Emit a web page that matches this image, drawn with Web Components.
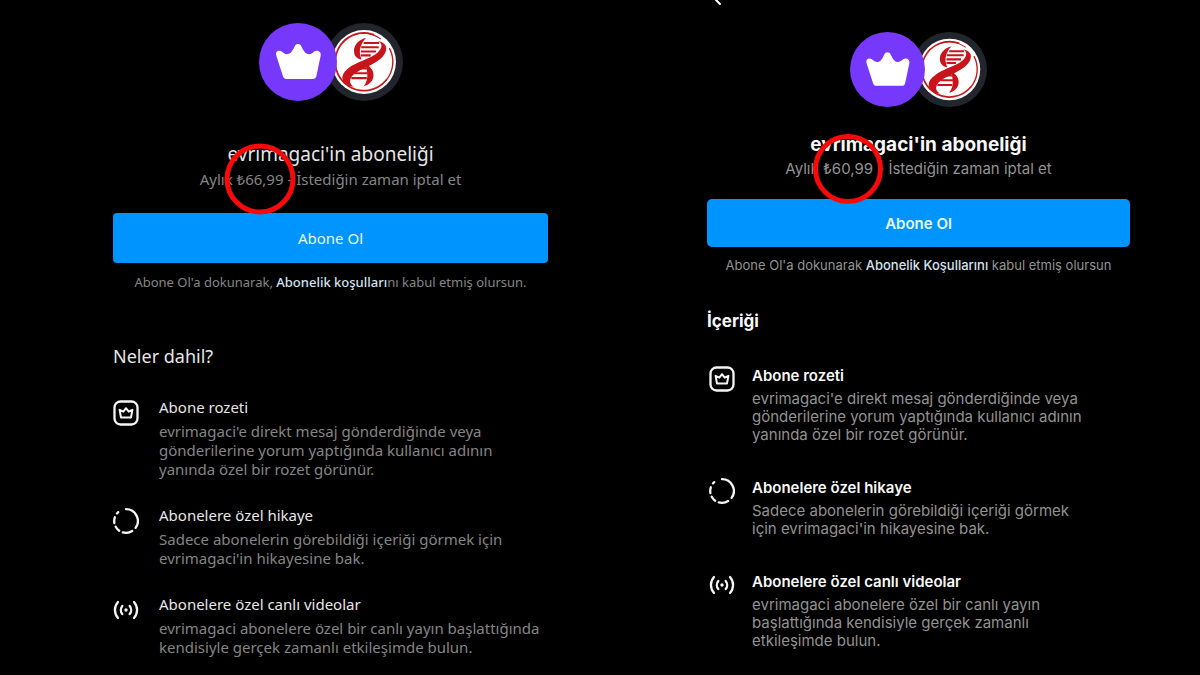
<!DOCTYPE html>
<html lang="tr">
<head>
<meta charset="utf-8">
<title>evrimagaci'in aboneliği</title>
<style>
  html, body { margin: 0; background: #000; }
  .compare { display: grid; grid-template-columns: 1fr 1fr; min-height: 100vh; overflow: hidden; }
  .android {
    font-family: "Noto Sans", sans-serif;
    --pad: 23px 52px 0 113px; --avatar: 78px; --overlap: 12px;
    --title-gap: 41px; --title-size: 19px; --title-weight: 400; --title-line: 25px;
    --button-gap: 22px; --button-height: 50px; --button-weight: 400; --radius: 4px;
    --terms-gap: 10px; --heading-gap: 53px; --heading-size: 18px; --heading-weight: 400;
    --list-gap: 27px; --item-gap: 24px; --item-weight: 400; --line: 19px; --desc-gap: 3px; --desc-width: 390px;
    --icon-col: 46px; --icon-pad: 5px 0 0; --ring: 71px; --ink: #e6e6e6; --muted: #858585;
  }
  .ios {
    font-family: "Inter", sans-serif;
    --pad: 0 70px 0 107px; --avatar: 75px; --overlap: 13px;
    --title-gap: 26px; --title-size: 19px; --title-weight: 700; --title-line: 24px;
    --button-gap: 18px; --button-height: 48px; --button-weight: 600; --radius: 5px;
    --terms-gap: 9px; --heading-gap: 35px; --heading-size: 17px; --heading-weight: 700;
    --list-gap: 31px; --item-gap: 32px; --item-weight: 600; --line: 18px; --desc-gap: 2px; --desc-width: 340px;
    --icon-col: 45px; --icon-pad: 2px 0 0 2px; --ring: 70px; --ink: #f8f8f8; --muted: #929292;
  }
</style>
</head>
<body>
<main class="compare">
  <subscribe-panel class="android">
    <avatar-pair slot="avatars"></avatar-pair>
    <span slot="title">evrimagaci'in aboneliği</span>
    <span slot="price">Aylık <marked-price>₺66,99</marked-price> - İstediğin zaman iptal et</span>
    <span slot="action">Abone Ol</span>
    <span slot="terms">Abone Ol'a dokunarak, <terms-link>Abonelik koşulları</terms-link>nı kabul etmiş olursun.</span>
    <span slot="heading">Neler dahil?</span>
    <perk-item icon="badge"><span slot="name">Abone rozeti</span>evrimagaci'e direkt mesaj gönderdiğinde veya gönderilerine yorum yaptığında kullanıcı adının yanında özel bir rozet görünür.</perk-item>
    <perk-item icon="story"><span slot="name">Abonelere özel hikaye</span>Sadece abonelerin görebildiği içeriği görmek için evrimagaci'in hikayesine bak.</perk-item>
    <perk-item icon="live"><span slot="name">Abonelere özel canlı videolar</span>evrimagaci abonelere özel bir canlı yayın başlattığında kendisiyle gerçek zamanlı etkileşimde bulun.</perk-item>
  </subscribe-panel>
  <subscribe-panel class="ios">
    <back-button slot="nav"></back-button>
    <avatar-pair slot="avatars"></avatar-pair>
    <span slot="title">evrimagaci'in aboneliği</span>
    <span slot="price">Aylık <marked-price>₺60,99</marked-price> - İstediğin zaman iptal et</span>
    <span slot="action">Abone Ol</span>
    <span slot="terms">Abone Ol'a dokunarak <terms-link>Abonelik Koşullarını</terms-link> kabul etmiş olursun</span>
    <span slot="heading">İçeriği</span>
    <perk-item icon="badge"><span slot="name">Abone rozeti</span>evrimagaci'e direkt mesaj gönderdiğinde veya gönderilerine yorum yaptığında kullanıcı adının yanında özel bir rozet görünür.</perk-item>
    <perk-item icon="story"><span slot="name">Abonelere özel hikaye</span>Sadece abonelerin görebildiği içeriği görmek için evrimagaci'in hikayesine bak.</perk-item>
    <perk-item icon="live"><span slot="name">Abonelere özel canlı videolar</span>evrimagaci abonelere özel bir canlı yayın başlattığında kendisiyle gerçek zamanlı etkileşimde bulun.</perk-item>
  </subscribe-panel>
</main>
<script>
  const define = (name, html, setup) => {
    const template = document.createElement('template');
    template.innerHTML = html;
    customElements.define(name, class extends HTMLElement {
      constructor() {
        super();
        this.attachShadow({ mode: 'open' }).append(template.content.cloneNode(true));
      }
      connectedCallback() { if (setup) setup(this); }
    });
  };

  define('subscribe-panel', `
    <style>
      :host { display: block; box-sizing: border-box; padding: var(--pad); color: var(--ink); min-width: 0; }
      header { display: flex; flex-direction: column; align-items: stretch; text-align: center; }
      h1, h2, p { margin: 0; }
      .avatars { display: flex; justify-content: center; }
      h1 { margin-top: var(--title-gap); font-size: var(--title-size); font-weight: var(--title-weight); line-height: var(--title-line); }
      .price { font-size: 15px; line-height: 24px; color: var(--muted); }
      button { margin: var(--button-gap) 0 0; height: var(--button-height); padding: 0; border: 0; border-radius: var(--radius);
        background: #0095fe; color: #e8f8ff; font-family: inherit; font-size: 15px; font-weight: var(--button-weight); cursor: pointer; }
      .terms { margin-top: var(--terms-gap); font-size: 13px; line-height: 18px; color: var(--muted); }
      h2 { margin-top: var(--heading-gap); font-size: var(--heading-size); font-weight: var(--heading-weight); line-height: 24px; }
      .perks { display: flex; flex-direction: column; gap: var(--item-gap); margin-top: var(--list-gap); }
    </style>
    <slot name="nav"></slot>
    <header>
      <div class="avatars"><slot name="avatars"></slot></div>
      <h1><slot name="title"></slot></h1>
      <p class="price"><slot name="price"></slot></p>
      <button type="button"><slot name="action"></slot></button>
      <p class="terms"><slot name="terms"></slot></p>
    </header>
    <h2><slot name="heading"></slot></h2>
    <div class="perks"><slot></slot></div>`);

  define('back-button', `
    <style>
      :host { display: block; height: 32px; }
      button { display: block; padding: 0 0 0 6px; border: 0; background: none; }
      svg { display: block; }
    </style>
    <button type="button" aria-label="Geri">
      <svg width="12" height="8" viewBox="0 0 12 8"><path d="M0 -3L7 4" fill="none" stroke="#fff" stroke-width="2" stroke-linecap="round"/></svg>
    </button>`);

  define('avatar-pair', `
    <style>
      :host { display: flex; }
      svg { display: block; width: var(--avatar); height: var(--avatar); }
      .crown { position: relative; z-index: 1; margin-right: calc(-1 * var(--overlap)); }
    </style>
    <svg class="crown" viewBox="0 0 234 234" aria-hidden="true">
      <circle cx="117" cy="117" r="117" fill="#7638fa"/>
      <path fill="#fff" d="M82 168C77 168 73 165 72 160L52 98C49 88 54 83 61 83C67 83 70 87 74 90C82 96 91 94 97 87C103 80 104 76 107 70C111 61 123 61 127 70C130 76 131 80 137 87C143 94 152 96 160 90C164 87 167 83 173 83C180 83 187 88 185 98L172 160C171 165 167 168 162 168Z"/>
    </svg>
    <svg viewBox="0 0 222 222" aria-hidden="true">
      <circle cx="111" cy="111" r="111" fill="#22262c"/>
      <circle cx="111" cy="111" r="91" fill="#fff"/>
      <g fill="none" stroke="#c51a1f" stroke-linecap="round">
        <path d="M138 33A82 82 0 1 0 174 163" stroke-width="5"/>
        <path d="M174 163A82 82 0 0 0 184 73" stroke-width="4"/>
        <path d="M84 33A84 84 0 0 1 158 45" stroke-width="3"/>
      </g>
      <g fill="#c8141a">
        <path d="M117 42C92 49 80 66 83 84C84 95 92 102 104 104C99 91 97 79 102 66C105 57 110 49 117 42Z"/>
        <path d="M150 51C164 57 164 70 151 83C135 99 98 108 76 122C53 137 46 151 51 164C55 175 68 181 83 182C69 174 68 162 78 150C93 133 140 119 159 101C180 81 182 57 150 51Z"/>
        <path d="M118 118C132 126 139 138 138 150C137 165 127 175 110 180C119 168 122 155 120 142Z"/>
      </g>
      <g fill="none" stroke="#c8141a" stroke-width="6">
        <path d="M110 57H154M103 69H153M102 81H145M102 92H130M95 129H122M84 143H121M75 157H119"/>
      </g>
    </svg>`);

  define('marked-price', `
    <style>
      :host { position: relative; display: inline-block; }
      .ring { position: absolute; z-index: 2; top: 50%; left: 50%; width: var(--ring); height: var(--ring); box-sizing: border-box;
        transform: translate(-50%, -50%); border: 5px solid #f80a0a; border-radius: 50%; pointer-events: none; }
    </style>
    <slot></slot><span class="ring"></span>`);

  define('terms-link', `
    <style>
      :host { display: inline; }
      a { color: #d3e2ee; font-weight: 500; text-decoration: none; }
    </style>
    <a href="#kosullar"><slot></slot></a>`);

  const icons = {
    badge: `<rect x="1.5" y="1.5" width="23" height="23" rx="6"/>
      <path stroke-width="2" stroke-linejoin="round" d="M8 17.5L6.6 9.8L10.3 11.6L13 8.2L15.7 11.6L19.4 9.8L18 17.5Z"/>`,
    story: `<path d="M13 1.2A11.8 11.8 0 0 1 22.6 19.9M19.2 23A11.8 11.8 0 0 1 9.8 24.4M6.2 22.7A11.8 11.8 0 0 1 2.7 18.8M1.4 15A11.8 11.8 0 0 1 1.8 9.3M4 5.4A11.8 11.8 0 0 1 5.2 4.1"/>`,
    live: `<path d="M5 5A12 12 0 0 0 5 21M21 5A12 12 0 0 1 21 21M9.3 9A6.2 6.2 0 0 0 9.3 17M16.7 9A6.2 6.2 0 0 1 16.7 17"/>
      <circle cx="13" cy="13" r="1.7" fill="currentColor" stroke="none"/>`
  };

  define('perk-item', `
    <style>
      :host { display: grid; grid-template-columns: var(--icon-col) minmax(0, 1fr); }
      .icon { padding: var(--icon-pad); }
      svg { display: block; width: 26px; height: 26px; color: #f5f5f5; }
      h3, p { margin: 0; font-size: 15px; }
      h3 { line-height: 24px; font-weight: var(--item-weight); }
      p { margin-top: var(--desc-gap); max-width: var(--desc-width); line-height: var(--line); color: var(--muted); }
    </style>
    <div class="icon"><svg viewBox="0 0 26 26" fill="none" stroke="currentColor" stroke-width="2.3" stroke-linecap="round" aria-hidden="true"></svg></div>
    <div><h3><slot name="name"></slot></h3><p><slot></slot></p></div>`,
    el => { el.shadowRoot.querySelector('svg').innerHTML = icons[el.getAttribute('icon')]; });
</script>
</body>
</html>
